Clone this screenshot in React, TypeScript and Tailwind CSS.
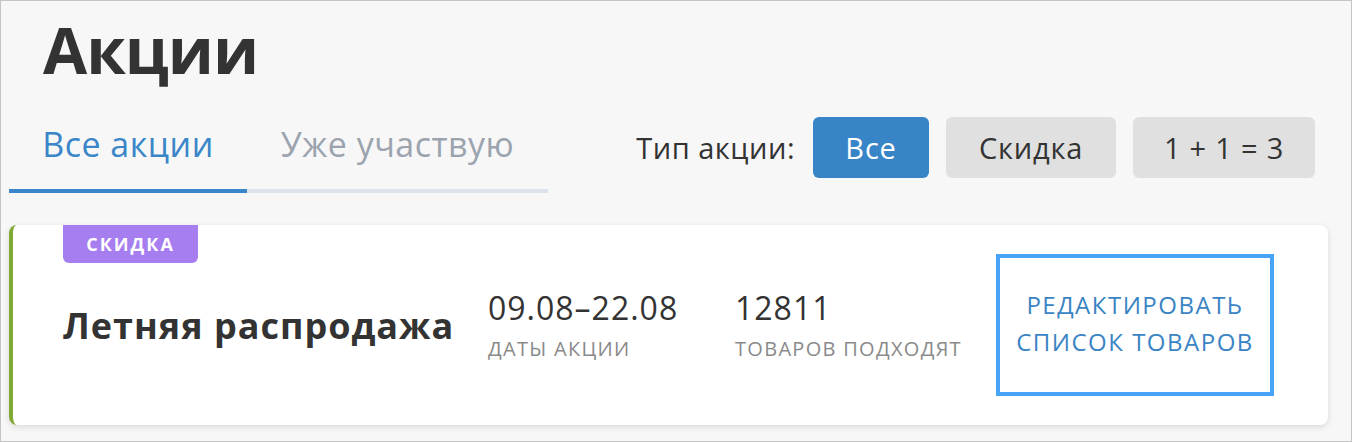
import React from "react";

export default function App() {
  return (
    <div
      className="w-[1352px] h-[442px] bg-[#f7f7f7] border border-[#c4c4c4] overflow-hidden text-[#333]"
      style={{ fontFamily: '"Open Sans", "Noto Sans", sans-serif' }}
    >
      <div className="pt-[17px] pl-[8px] pr-[23px]">
        <h1 className="ml-[34px] text-[64px] leading-[64px] font-bold text-[#333] tracking-[-1px]">Акции</h1>

        <div className="flex items-start justify-between">
          <div className="flex">
            <div className="w-[238px] pt-[45px] pb-[28px] border-b-4 border-[#3a86c8] text-center text-[34px] leading-[34px] text-[#3a86c8] tracking-[0.5px]">
              Все акции
            </div>
            <div className="w-[301px] pt-[45px] pb-[28px] border-b-4 border-[#dde3ea] text-center text-[34px] leading-[34px] text-[#9ba4ae] tracking-[0.5px]">
              Уже участвую
            </div>
          </div>
          <div className="flex items-center gap-[17px] mt-[35px] mr-[13px]">
            <span className="mr-[1px] text-[29px] text-[#333] tracking-[0.5px]">Тип акции:</span>
            <button className="w-[116px] h-[61px] rounded-[6px] bg-[#3784c6] text-white text-[29px] tracking-[0.8px]">
              Все
            </button>
            <button className="w-[170px] h-[61px] rounded-[6px] bg-[#e0e0e0] text-[#333] text-[29px] tracking-[0.8px]">
              Скидка
            </button>
            <button className="w-[182px] h-[61px] rounded-[6px] bg-[#e0e0e0] text-[#333] text-[29px] tracking-[0.8px]">
              1 + 1 = 3
            </button>
          </div>
        </div>

        <div className="relative mt-[32px] h-[200px] bg-white rounded-[8px] border-l-4 border-[#80a834] shadow-[0_2px_6px_rgba(0,0,0,0.12)] flex items-center pl-[50px]">
          <div className="absolute top-0 left-[50px] w-[135px] h-[38px] rounded-b-[6px] bg-[#a67ef0] flex items-center justify-center text-white font-bold text-[18px] tracking-[2px]">
            СКИДКА
          </div>
          <div className="w-[425px] pt-[2px] text-[36px] font-bold text-[#333] tracking-[1px]">
            Летняя распродажа
          </div>
          <div className="w-[247px] flex flex-col">
            <span className="text-[32px] leading-[40px] text-[#333] tracking-[1px]">09.08–22.08</span>
            <span className="mt-[8px] text-[20px] leading-[26px] text-[#8a8a8a] tracking-[1.3px]">ДАТЫ АКЦИИ</span>
          </div>
          <div className="w-[261px] flex flex-col">
            <span className="text-[32px] leading-[40px] text-[#333] tracking-[1px]">12811</span>
            <span className="mt-[8px] text-[20px] leading-[26px] text-[#8a8a8a] tracking-[1.3px]">ТОВАРОВ ПОДХОДЯТ</span>
          </div>
          <button className="w-[278px] h-[142px] pb-[5px] border-4 border-[#47a3f5] flex flex-col items-center justify-center text-[#3a84c4] text-[24px] leading-[37px] tracking-[1.5px]">
            <span>РЕДАКТИРОВАТЬ</span>
            <span>СПИСОК ТОВАРОВ</span>
          </button>
        </div>
      </div>
    </div>
  );
}
